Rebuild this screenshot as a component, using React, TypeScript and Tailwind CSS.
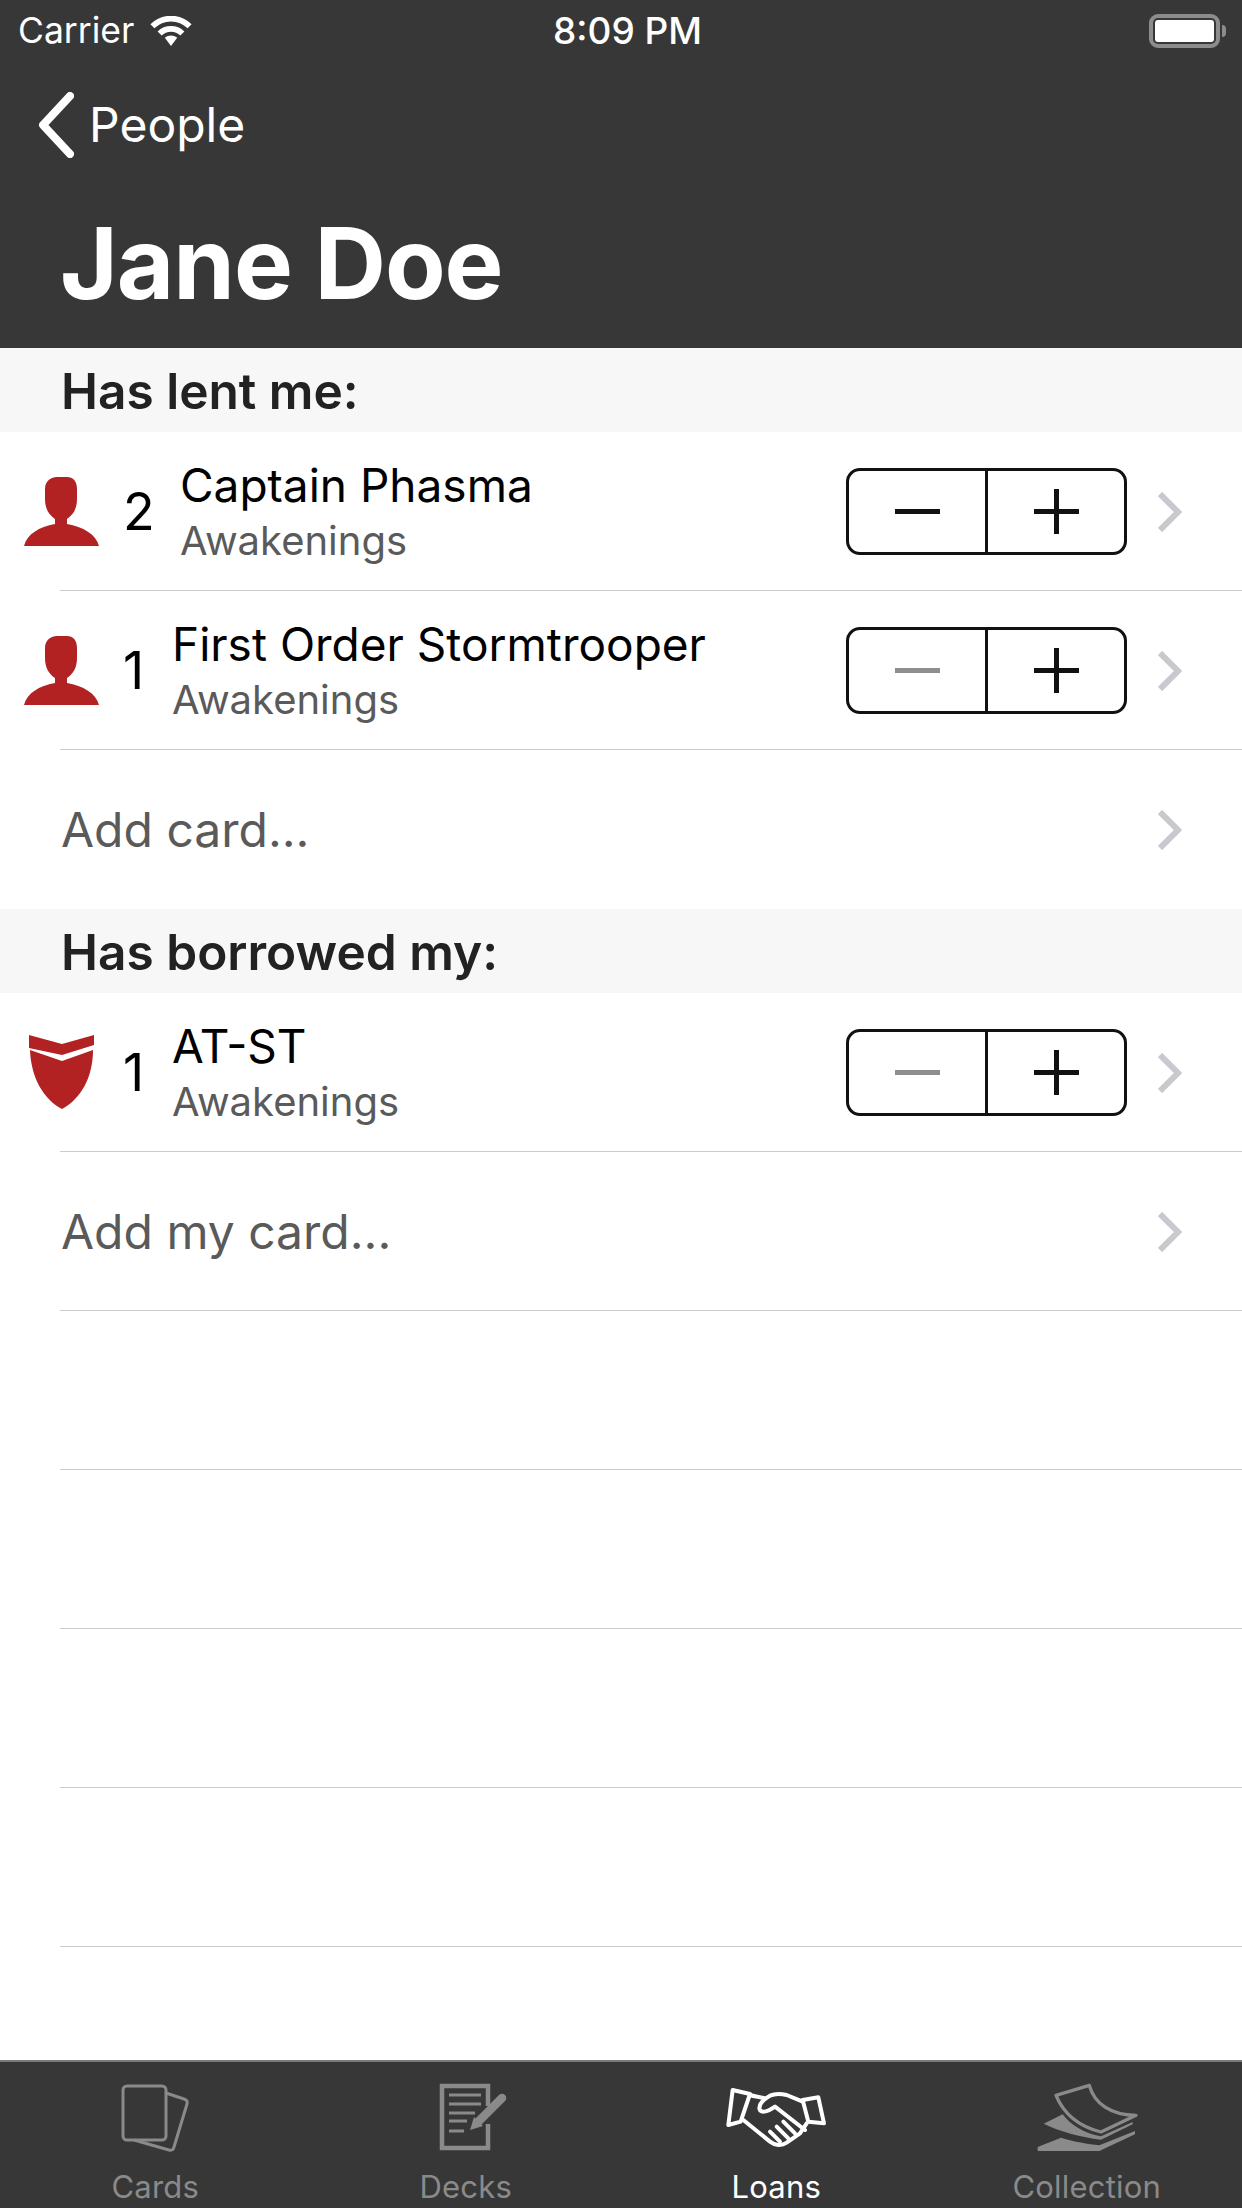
import React from "react";

const F = { fontFamily: "Inter, 'Liberation Sans', sans-serif" };

function Person() {
  return (
    <svg width="75" height="69" viewBox="0 0 75 69" className="block shrink-0">
      <path fill="#b22222" d="M0 69 C3 57 15 50 31 47 L31 42 C25 38 21 32 21 22 L21 12 C21 4 27 0 33 0 L43 0 C49 0 53 4 53 12 L53 22 C53 32 49 38 43 42 L43 47 C59 50 72 57 75 69 Z" />
    </svg>
  );
}

function Shield() {
  return (
    <svg width="65" height="75" viewBox="0 0 65 75" className="ml-[5px] block shrink-0">
      <path fill="#b22222" d="M0 0 L33 9 L65 0 L65 10 L33 20 L0 13 Z" />
      <path fill="#b22222" d="M1 15 L33 26 L64 15 C64 42 52 64 33 74 C14 64 2 42 1 15 Z" />
    </svg>
  );
}

function Chevron() {
  return (
    <svg width="24" height="40" viewBox="0 0 24 40" className="block shrink-0">
      <path d="M2 2 L20 20 L2 38" fill="none" stroke="#c8c8ce" strokeWidth="6" />
    </svg>
  );
}

function Stepper({ disabled }: { disabled?: boolean }) {
  return (
    <div className="flex h-[87px] w-[281px] shrink-0 rounded-[14px] border-[3px] border-[#111111]">
      <div className="flex w-[139px] shrink-0 items-center justify-center border-r-[3px] border-[#111111]">
        <div className={`h-[5px] w-[45px] ${disabled ? "bg-[#8e8e8e]" : "bg-[#111111]"}`} />
      </div>
      <div className="flex flex-1 items-center justify-center">
        <svg width="45" height="45" viewBox="0 0 45 45" className="block">
          <path d="M0 22.5 H45 M22.5 0 V45" stroke="#111111" strokeWidth="5" />
        </svg>
      </div>
    </div>
  );
}

function Separator() {
  return <div className="absolute bottom-0 left-[60px] right-0 h-px bg-[#cccccc]" />;
}

function CardRow({ icon, qty, title, gap, disabled }: { icon: React.ReactNode; qty: string; title: string; gap: string; disabled?: boolean }) {
  return (
    <div className="relative flex h-[159px] items-center pr-[60px]">
      <div className="flex w-[123px] shrink-0 pl-[24px]">{icon}</div>
      <div className={`text-[52px] leading-none text-black ${gap}`}>{qty}</div>
      <div className="flex flex-1 flex-col">
        <div className="text-[46px] leading-[58px] text-black">{title}</div>
        <div className="text-[40px] leading-[54px] text-[#5a5a5a]">Awakenings</div>
      </div>
      <Stepper disabled={disabled} />
      <div className="ml-[31px]"><Chevron /></div>
      <Separator />
    </div>
  );
}

function AddRow({ label, noLine }: { label: string; noLine?: boolean }) {
  return (
    <div className="relative flex h-[159px] items-center pl-[61px] pr-[60px]">
      <div className="flex-1 text-[48px] text-[#5a5a5a]">{label}</div>
      <Chevron />
      {!noLine && <Separator />}
    </div>
  );
}

function SectionHead({ label }: { label: string }) {
  return (
    <div className="flex h-[84px] items-center bg-[#f7f7f7] pl-[61px] pt-[2px] text-[49.6px] font-semibold text-[#222222]">{label}</div>
  );
}

function EmptyRow() {
  return (
    <div className="relative h-[159px]">
      <Separator />
    </div>
  );
}

function Tab({ label, active, children }: { label: string; active?: boolean; children: React.ReactNode }) {
  return (
    <div className="flex flex-1 flex-col items-center">
      <div className="flex h-[107px] items-center justify-center pt-[3px]">{children}</div>
      <div className={`text-[31px] leading-[36px] tracking-[0.2px] ${active ? "text-white" : "text-[#8a8a8a]"}`}>{label}</div>
    </div>
  );
}

export default function App() {
  return (
    <div className="flex h-[2208px] w-[1242px] flex-col overflow-hidden bg-white" style={F}>
      <header className="h-[348px] shrink-0 bg-[#373737] text-white">
        <div className="relative flex h-[62px] items-center pl-[18px]">
          <span className="text-[35.5px]">Carrier</span>
          <svg width="42" height="31" viewBox="0 0 40 30" className="ml-[16px] block">
            <path d="M2 10 C12 0 28 0 38 10 M9 17 C15 11 25 11 31 17" fill="none" stroke="#fff" strokeWidth="5.5" />
            <path d="M14 21 C18 18 22 18 26 21 L20 29 Z" fill="#fff" />
          </svg>
          <span className="absolute left-[553px] text-[37px] font-medium">8:09 PM</span>
          <div className="absolute left-[1149px] flex items-center">
            <div className="h-[34px] w-[71px] rounded-[9px] border-[4px] border-[#8c8c8c] p-[2px]">
              <div className="h-full w-full rounded-[3px] bg-white" />
            </div>
            <div className="ml-[2px] h-[12px] w-[4px] rounded-r-full bg-[#8c8c8c]" />
          </div>
        </div>
        <div className="mt-[30px] flex h-[66px] items-center pl-[36px]">
          <svg width="38" height="66" viewBox="0 0 38 66" className="block">
            <path d="M34 4 L7 33 L34 62" fill="none" stroke="#fff" strokeWidth="8" strokeLinecap="round" strokeLinejoin="round" />
          </svg>
          <span className="ml-[15px] text-[48px]">People</span>
        </div>
        <div className="pl-[60px] pt-[47px] text-[99px] font-bold leading-[116px] tracking-[-1px]">Jane Doe</div>
      </header>

      <SectionHead label="Has lent me:" />
      <CardRow icon={<Person />} qty="2" title="Captain Phasma" gap="w-[57px]" />
      <CardRow icon={<Person />} qty="1" title="First Order Stormtrooper" gap="w-[49px]" disabled />
      <AddRow label="Add card..." noLine />
      <SectionHead label="Has borrowed my:" />
      <CardRow icon={<Shield />} qty="1" title="AT-ST" gap="w-[49px]" disabled />
      <AddRow label="Add my card..." />
      <EmptyRow />
      <EmptyRow />
      <EmptyRow />
      <EmptyRow />

      <div className="flex-1" />
      <nav className="flex h-[148px] shrink-0 border-t-2 border-[#7a7a7a] bg-[#373737]">
        <Tab label="Cards">
          <svg width="72" height="72" viewBox="0 0 72 72" fill="none" stroke="#8a8a8a" strokeWidth="3" className="block">
            <rect x="4" y="5" width="43" height="54" rx="4" />
            <path d="M47 12 L65 18 Q69 19 68 23 L55 66 Q54 70 50 69 L15 59" />
          </svg>
        </Tab>
        <Tab label="Decks">
          <svg width="76" height="70" viewBox="0 0 76 70" fill="none" stroke="#8a8a8a" className="block overflow-visible">
            <path d="M60 24 V4 H14 V66 H60 V42" strokeWidth="4.5" />
            <path d="M21 13 H53 M21 22 H53 M21 31 H47 M21 39 H39 M21 49 H36" strokeWidth="3" />
            <path d="M74 16 L50 40" strokeWidth="8.5" strokeLinecap="round" />
            <path d="M42 48 L46 35 L55 44 Z" fill="#8a8a8a" stroke="none" />
          </svg>
        </Tab>
        <Tab label="Loans" active>
          <svg width="112" height="74" viewBox="0 0 336 222" fill="none" stroke="#fff" strokeWidth="12" strokeLinejoin="round" strokeLinecap="round" className="block">
            <path d="M38 30 L90 42 L62 125 L25 135 Z" />
            <path d="M248 60 L295 52 L312 130 L265 125 Z" />
            <path d="M90 45 C105 50 120 50 135 55" />
            <path d="M248 65 L200 45 C180 40 165 40 150 47 C130 58 118 72 118 85 C120 100 140 98 165 80 L255 150" />
            <path d="M70 120 L150 185 C165 197 185 198 200 188 L240 160 L260 130" />
            <path d="M150 155 L180 185 M170 140 L205 175 M190 125 L225 160" />
          </svg>
        </Tab>
        <Tab label="Collection">
          <svg width="112" height="80" viewBox="0 0 336 240" fill="none" className="block">
            <path d="M75 55 L175 25 C190 80 240 115 315 115 L210 165 C150 150 100 115 75 55 Z" stroke="#8a8a8a" strokeWidth="10" strokeLinejoin="round" />
            <path d="M38 140 L95 112 C120 145 160 170 210 178 L305 135 L305 142 L210 188 C150 180 90 165 38 140 Z" fill="#8a8a8a" />
            <path d="M20 210 L90 182 C130 195 170 200 205 205 L312 162 L312 172 L205 222 L20 222 Z" fill="#8a8a8a" />
          </svg>
        </Tab>
      </nav>
    </div>
  );
}
